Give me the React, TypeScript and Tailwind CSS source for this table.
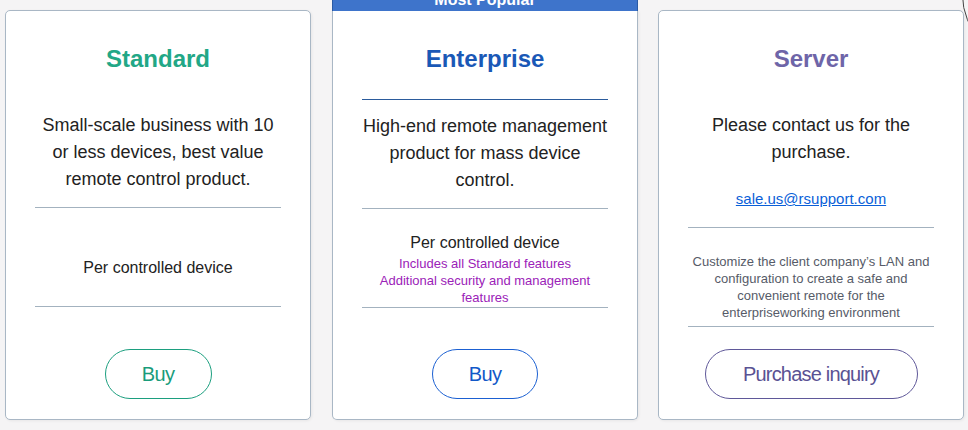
const font = { fontFamily: '"Liberation Sans", Arial, sans-serif' }

const cardBase =
  'relative flex h-[410px] w-[306px] shrink-0 flex-col items-center rounded-[5px] border border-[#a9b7c5] bg-white px-[29px] text-center shadow-[1px_1px_3px_rgba(0,0,0,0.06)]'

function Divider({ color = 'bg-[#a3b2bf]' }: { color?: string }) {
  return <div className={`h-px w-full ${color}`} />
}

export default function App() {
  return (
    <div className="relative h-[430px] w-[968px] overflow-hidden bg-[#f5f4f5] text-[#222]" style={font}>
      {/* bit of a round element cut off at the top right */}
      <div className="absolute left-[962px] top-[-70px] h-[130px] w-[130px] rounded-full border border-[#444]" />

      <div className="flex items-start gap-5 pl-[5px] pt-[10px]">
        {/* Standard */}
        <div className={cardBase}>
          <h2 className="mt-[32px] h-8 text-[24px] font-bold leading-8 text-[#22a786]">Standard</h2>
          <p className="mt-[37px] text-[18px] leading-[27px]">
            Small-scale business with 10 or less devices, best value remote control product.
          </p>
          <div className="mt-[14px] w-full">
            <Divider />
          </div>
          <div className="flex h-[98px] w-full flex-col items-center pt-[48px]">
            <p className="text-[16px] leading-6">Per controlled device</p>
          </div>
          <Divider />
          <div className="mt-auto pb-[20px]">
            <button className="h-[50px] w-[107px] rounded-full border border-[#1c9f7f] text-[20px] tracking-[-0.03em] text-[#199c7b]">
              Buy
            </button>
          </div>
        </div>

        {/* Enterprise */}
        <div className={`${cardBase} ml-px rounded-t-none border-t-[#2a5aa4]`}>
          <div className="absolute bottom-full left-[-1px] right-[-1px] h-[30px] border-x border-t border-[#2a5aa4] bg-[#3e74cb] pt-[10px] text-[16px] font-bold leading-4 text-white">
            Most Popular
          </div>
          <h2 className="mt-[32px] h-8 text-[24px] font-bold leading-8 text-[#1a58b6]">Enterprise</h2>
          <div className="mt-[24px] w-full">
            <Divider color="bg-[#2b5b9c]" />
          </div>
          <p className="mt-[13px] text-[18px] leading-[27px]">
            High-end remote management product for mass device control.
          </p>
          <div className="mt-[14px] w-full">
            <Divider />
          </div>
          <div className="flex h-[98px] w-full flex-col items-center pt-[22px]">
            <p className="text-[16px] leading-6">Per controlled device</p>
            <p className="text-[13px] leading-[17px] text-[#9b22b8]">
              Includes all Standard features
              <br />
              Additional security and management features
            </p>
          </div>
          <Divider />
          <div className="mt-auto pb-[20px]">
            <button className="h-[50px] w-[106px] rounded-full border border-[#1b60d2] text-[20px] tracking-[-0.03em] text-[#1158c8]">
              Buy
            </button>
          </div>
        </div>

        {/* Server */}
        <div className={cardBase}>
          <h2 className="mt-[32px] h-8 text-[24px] font-bold leading-8 text-[#6e65a8]">Server</h2>
          <p className="mt-[37px] text-[18px] leading-[27px]">Please contact us for the purchase.</p>
          <a href="#" className="mt-[22px] text-[15px] leading-[22px] text-[#0a5fd8] underline">
            sale.us@rsupport.com
          </a>
          <div className="mt-[17px] w-full">
            <Divider />
          </div>
          <p className="mt-[25px] px-[4px] text-[13px] leading-[17px] text-[#565b68]">
            Customize the client company’s LAN and configuration to create a safe and convenient remote for the
            enterpriseworking environment
          </p>
          <div className="mt-[5px] w-full">
            <Divider />
          </div>
          <div className="mt-auto pb-[20px]">
            <button className="h-[50px] w-[213px] rounded-full border border-[#5f5899] text-[20px] tracking-[-0.04em] text-[#5a5293]">
              Purchase inquiry
            </button>
          </div>
        </div>
      </div>
    </div>
  )
}
